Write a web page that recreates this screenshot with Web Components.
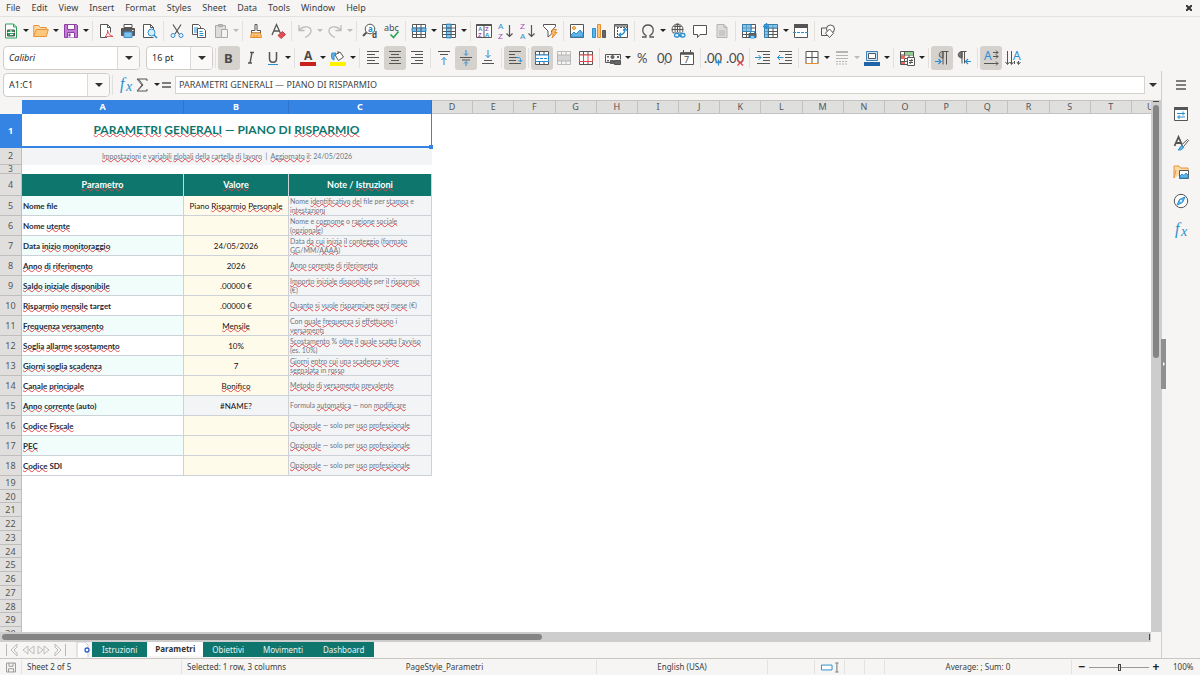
<!DOCTYPE html>
<html lang="en">
<head>
<meta charset="utf-8">
<title>Piano Risparmio — Calc</title>
<style>
html, body { margin: 0; height: 100%; }
body { font: 9px/12px "Noto Sans", "Liberation Sans", sans-serif; color: #3d3d3d; background: #f6f5f4; overflow: hidden; }
</style>
</head>
<body>
<calc-window></calc-window>
<script>
const define = (name, html, setup) => customElements.define(name, class extends HTMLElement {
  connectedCallback() {
    if (this.shadowRoot) return;
    const root = this.attachShadow({ mode: 'open' });
    const t = document.createElement('template');
    t.innerHTML = typeof html === 'function' ? html(this) : html;
    root.append(t.content.cloneNode(true));
    if (setup) setup(root, this);
  }
});

const RESET = `
  button { font: inherit; color: inherit; background: none; border: 0; padding: 0; margin: 0; }
  input { font: inherit; color: inherit; background: none; border: 0; padding: 0; margin: 0; outline: 0; min-width: 0; }
`;

const GRID = 'M1.5 1.5h13v13h-13zM5.5 1.5v13M10 1.5v13M1.5 5h13M1.5 8.5h13M1.5 11.5h13';
const ICONS = {
  new: '<path class="g ff" d="M2.5 1h8l3 3v11h-11z"/><path class="g" d="M10.5 1v3h3"/><path class="fg" d="M4.5 7h7v6h-7z"/><path stroke="#fff" d="M4.5 9.5h7M8 7v2.5M7 11.5h3"/>',
  open: '<path d="M.8 13.5V2.5h5l1.5 2h6v3" stroke="#e8953a" fill="#fbd9a6"/><path d="M.8 13.5l2.5-7h12l-2 7z" stroke="#e8953a" fill="#fdc77c"/>',
  save: '<path d="M1.5 1.5h12l1 1v12h-13z" stroke="#8e3fa5" fill="#c17bd4"/><path d="M4.5 1.5h7v5h-7zM4.5 14.5v-5h7v5" stroke="#8e3fa5" fill="#fff"/><path d="M6.5 10.5v3" stroke="#8e3fa5" stroke-width="2"/>',
  pdf: '<path class="ff" d="M9 14.5H2.5v-13h7l3 3v5"/><path d="M9.5 1.5v3h3"/><path class="r" d="M7 14c2-2 3-5 2.5-7 0 3 2.5 5.5 5.5 6.500-3-.5-6 0-8 .500z"/>',
  print: '<path d="M4.5 5.5v-4h7v4M1.5 5.5h13v7h-13z" fill="#5a5a5a"/><path d="M4 4.5v-3h8v3z" fill="#fff"/><path d="M4 9h8v5.5H4z" fill="#7fc3ec" stroke="#3b8fc6"/><path stroke="#fff" d="M12 7.5h1.5"/>',
  preview: '<path class="ff" d="M11.5 14.5h-10v-13h7l3 3v4"/><path d="M8.5 1.5v3h3"/><circle class="b" cx="9.5" cy="9.5" r="3.5" fill="#d8ecf8"/><path class="b" stroke-width="1.5" d="M12 12l3 3"/>',
  cut: '<path d="M4 1.5l6 9.5M12 1.5L6 11" stroke-width="1.2"/><circle class="b" cx="4" cy="12.5" r="2"/><circle class="b" cx="12" cy="12.5" r="2"/>',
  copy: '<path class="ff" d="M1.5 1.5h6l2 2v8h-8z"/><path class="b" d="M3 5h4M3 7h3M3 9h3"/><path class="ff" d="M6.5 5.5h6l2 2v7h-8z"/><path class="b" d="M8.5 8.5h3M8.5 10.5h4M8.5 12.5h4"/>',
  paste: '<path stroke="#aaa" fill="#ddd" d="M2.5 2.5h10v12h-10z"/><path stroke="#aaa" fill="#bbb" d="M5.5 1.5h4v2h-4z"/><path stroke="#aaa" fill="#f3f3f3" d="M8.5 6.5h6v8h-6z"/>',
  brush: '<path class="ff" d="M7 1.5h2v6h3.5v2.5h-9V7.5H7z"/><path d="M3.5 10l-1 4.5h11l-1-4.5z" stroke="#e88d2c" fill="#fbc47c"/><path stroke="#e88d2c" d="M6 14v-2M9 14v-2"/>',
  clear: '<path stroke-width="1.3" d="M2 12L6.5 1.5l4 9M4 8h5.5"/><path d="M8 12.5l4.5-4 3 3-4.5 4z" fill="#e44d55" stroke="#c83f48"/>',
  undo: '<path stroke="#bbb" stroke-width="1.3" d="M2 2v5.5h5.5M2.5 7C6 2.5 14 3 14 8c0 3-3 5-6 6.5"/>',
  redo: '<path stroke="#bbb" stroke-width="1.3" d="M14 2v5.5H8.5M13.5 7C10 2.5 2 3 2 8c0 3 3 5 6 6.5"/>',
  find: '<circle cx="8" cy="6" r="4.8" fill="#fff"/><path stroke-width="2" d="M4.5 9.5L1 13"/><text x="6" y="9" class="tb" font-size="8" font-weight="bold">a</text><text x="10" y="15" class="tk" font-size="8" font-weight="bold">d</text>',
  spell: '<text x="0" y="8" class="tk" font-size="9">abc</text><path class="g" stroke-width="1.6" d="M6.5 11.5l3 3 5-6"/>',
  row: `<path class="ff" d="${GRID}"/><path class="fb b" d="M1 5h14v3.5H1z" opacity=".85"/><path d="M5.5 5v3.5M10 5v3.5"/>`,
  col: `<path class="ff" d="${GRID}"/><path class="fb b" d="M5.5 1h4.5v14H5.5z" opacity=".75"/><path d="M5.5 5H10M5.5 8.5H10M5.5 11.5H10"/>`,
  sort: '<path class="ff" d="M.5 1.5h15v13H.5zM8 1.5v13"/><path stroke-width="2" d="M.5 2h15"/><text x="2" y="8" class="tb l" font-size="6" font-weight="bold">A</text><text x="2" y="14" class="tp l" font-size="6" font-weight="bold">Z</text><text x="9" y="8" class="tp l" font-size="6" font-weight="bold">Z</text><text x="9" y="14" class="tb l" font-size="6" font-weight="bold">A</text>',
  az: '<text x="0" y="6" class="tb l" font-size="8">A</text><text x="0" y="16" class="tp l" font-size="8">Z</text><path d="M11.5 2v12M8.5 10.5l3 3 3-3" stroke-width="1.2"/>',
  za: '<text x="0" y="6" class="tp l" font-size="8">Z</text><text x="0" y="16" class="tb l" font-size="8">A</text><path d="M11.5 2v12M8.5 10.5l3 3 3-3" stroke-width="1.2"/>',
  filter: '<path class="ff" d="M1.5 1.5h12v2l-4 4.5v3L6 14V8L1.5 3.5z"/><path d="M11 6.5h3.5l-2 3h2.5l-5 5.5 1.5-4H9z" fill="#fbc47c" stroke="#e88d2c"/>',
  image: '<path class="ff" d="M1.5 1.5h13v13h-13z"/><circle cx="5" cy="5" r="1.5" fill="#fbc47c" stroke="#e88d2c"/><path class="b fb" d="M2 14v-2l3-3 2 2 4-4 3 3.5V14z"/>',
  chart: '<path class="b fb" d="M1.5 5.5h3v9h-3z"/><path d="M6.5 1.5h3v13h-3z" fill="#fbc47c" stroke="#e88d2c"/><path fill="#666" d="M11.5 7.5h3v7h-3z"/>',
  pivot: '<path class="ff" d="M1.5 1.5h13v13h-13z"/><path stroke-dasharray="2 1" d="M4.5 4v11M4 4.5h11"/><path stroke="#999" stroke-width="2" d="M2 3h12"/><path class="b" stroke-width="1.3" d="M6 12c4.5 0 6-2 6-6M10 7.5L12 5.5l2 2M8 10l-2 2 2 2"/>',
  omega: '<path stroke-width="1.3" d="M2 14h4v-1.5C1 9.5 2 2 8 2s7 7.5 2 10.5V14h4"/>',
  link: '<circle cx="7.5" cy="6.5" r="5.5"/><path d="M2 6.5h11M7.5 1v11M3.5 3.5h8M3.5 9.5h8"/><ellipse cx="7.5" cy="6.5" rx="2.5" ry="5.5"/><path fill="#f6f5f4" stroke="none" d="M4 9.5h12V16H4z"/><rect class="b" stroke-width="1.3" x="4.5" y="10.5" width="5" height="3.5" rx="1.7"/><rect class="b" stroke-width="1.3" x="10" y="10.5" width="5" height="3.5" rx="1.7"/><path class="b" d="M8 12.3h4"/>',
  comment: '<path class="ff" d="M1.5 2.5h13v9H8L5.5 14.5v-3h-4z"/>',
  header: '<path stroke="#b5b5b5" fill="#dcdcdc" d="M3 1.5h7l3 3v10H3z"/><path stroke="#b5b5b5" d="M10 1.5v3h3M5 8h6M5 10h6M5 12h6"/>',
  parea: `<path class="ff" d="${GRID}"/><path class="b fb" d="M1.5 1.5H10v7H1.5z" opacity=".75"/><path d="M8 10.5h7v4H8z" fill="#666"/><path d="M9.5 10V8.5h4V10M9.5 13h4v2h-4z" class="b ff"/>`,
  freeze: `<path class="ff" d="${GRID}"/><path class="b fb" d="M1.5 1.5h13V5h-13zM1.5 5H5v9.5H1.500z" opacity=".75"/><path class="b" stroke-width="1.5" d="M3.5 0v6M0 3.5h6"/>`,
  split: '<path class="ff" d="M1.5 1.5h13v13h-13z"/><path fill="#555" d="M1.5 1.5h13v3h-13z"/><path class="b" stroke-dasharray="3 1" d="M0 9.5h16"/>',
  shapes: '<path d="M1.5 5h7v7.5h-7z"/><circle class="ff" cx="10.5" cy="6" r="4"/><path class="ff" d="M9.5 6l4 4.2-4 4.3-4-4.3z"/>',
  bold: '<text x="3" y="13" class="tk" font-size="13" font-weight="bold">B</text>',
  italic: '<path stroke-width="1.4" d="M9 2.5L7 13M7 2.5h4M5 13h4"/>',
  under: '<path stroke-width="1.5" d="M4.5 2v6.5c0 5 7 5 7 0V2"/><path class="b" d="M3 14.5h10"/>',
  fcolor: '<text x="4" y="10" class="tk" font-size="12" font-weight="bold">A</text><path fill="#c9211e" stroke="none" d="M0 12h16v4H0z"/>',
  fill: '<path class="ff" d="M5 5l5-3 3.5 5-5 3.5zM8 4V1"/><path class="b fb" d="M2 3h4l-2 3v4c-3-1-3-4-2-7z"/><path fill="#fff200" stroke="none" d="M0 12h16v4H0z"/>',
  left: '<path d="M2 1.5h12M2 4.5h8M2 7.5h12M2 10.5h8M2 13.5h12"/>',
  center: '<path d="M2 1.5h12M4 4.5h8M2 7.5h12M4 10.5h8M2 13.5h12"/>',
  right: '<path d="M2 1.5h12M6 4.5h8M2 7.5h12M6 10.5h8M2 13.5h12"/>',
  top: '<path d="M2 1.5h12M4 4.5h8"/><path class="b" d="M8 15V7.5M5.5 10L8 7.5l2.5 2.5"/>',
  middle: '<path d="M2 7.5h12M4 10h8"/><path class="b" d="M8 0v5M6 3.5l2 2 2-2M8 16v-4M6 13.5l2-2 2 2"/>',
  bottom: '<path d="M2 13.5h12M4 10.5h8"/><path class="b" d="M8 0v7.5M5.5 5L8 7.5 10.5 5"/>',
  wrap: '<path d="M2 1.5h12M2 4.5h6M2 7.5h7M2 10.5h7M2 13.5h12"/><path class="b" d="M9 7.5h2.5c2 0 2 1 2 4M11.5 10l2 2 2-2"/>',
  merge: `<path class="ff" d="${GRID}"/><path class="b" fill="#fff" d="M1.5 5h13v6.5h-13z"/><path class="b" stroke-dasharray="3 1" d="M2 8.5h12"/>`,
  mergec: '<path stroke="#bbb" d="M1.5 1.5h13v13h-13zM5.5 1.5v4M10 1.5v4M5.5 11v4M10 11v4"/><path stroke="#b5b5b5" fill="#d5d5d5" d="M1.5 5h13v6h-13z"/>',
  unmerge: `<path class="ff" d="${GRID}"/><path class="r" fill="#fff" d="M1.5 5h13v6.5h-13zM5.5 5v6.5M10 5v6.5"/>`,
  currency: '<path d="M9 12.5H.5v-8h15v5"/><path fill="#666" stroke="none" d="M2 6h2v1.5H2zM12 6h2v2h-2zM2 10h2v1.5H2z"/><circle cx="7.5" cy="7" r="1.5" fill="#666"/><path fill="#666" d="M5.5 13.500v-3h3v3zM9.500 14.500v-4h6v4z"/>',
  percent: '<text x="2" y="13" class="tk" font-size="13" font-family="Lato">%</text>',
  number: '<text x="0" y="13" class="tk" font-size="13" font-family="Lato">00</text><path d="M8 12.500v2"/>',
  date: '<path class="ff" d="M1.5 3h13v11.5h-13z"/><path stroke-width="2.5" d="M1.5 3.5h13"/><path d="M4.5 0v3M11.5 0v3"/><text x="5" y="13" class="tk" font-size="9">7</text>',
  adddec: '<text x="-2" y="13" class="tk" font-size="13" font-family="Lato">.00</text><path class="b" stroke-width="1.3" d="M12.5 9.5v6M9.5 12.5h6"/>',
  deldec: '<text x="-2" y="13" class="tk" font-size="13" font-family="Lato">.00</text><path class="r" stroke-width="1.3" d="M9.5 10l5.5 5.5M15 10l-5.5 5.5"/>',
  indent: '<path d="M2 1.5h13M8 4.5h7M8 7.5h7M8 10.5h7M2 13.5h13"/><path class="b" d="M0 7.5h6M3.5 5L6 7.5 3.5 10"/>',
  outdent: '<path d="M2 1.5h13M8 4.5h7M8 7.5h7M8 10.5h7M2 13.5h13"/><path class="b" d="M6.5 7.5H.5M3 5L.5 7.5 3 10"/>',
  border: '<path class="ff" d="M2 1.5h12v12H2zM8 1.5v12M2 7.5h12"/><path stroke="#e88d2c" d="M1.5 13.5h13"/>',
  bstyle: '<path stroke="#b5b5b5" stroke-width="2" d="M2 2h12"/><path stroke="#b5b5b5" d="M2 5.5h12M2 8.5h12"/><path stroke="#b5b5b5" stroke-dasharray="2 1" d="M2 11.5h12M2 14h12"/>',
  bcolor: '<path stroke="#3b7fb8" fill="#cfe6f6" d="M2.5 1.5h11v9h-11z"/><path class="ff" d="M4.5 3.5h7v5h-7z"/><path fill="#1f63a8" stroke="none" d="M0 12h16v4H0z"/>',
  cond: `<path class="ff" d="${GRID}"/><path fill="#8ed08e" stroke="none" d="M6 2h8v3H6z"/><path fill="#e46a62" stroke="none" d="M2 5.5h4V9H2zM2 12h4v2H2z"/><path class="ff" d="M8.5 7.5h7v8h-7z"/><path d="M10 10.5h4M10 12.5h4M13 9l-2 5"/>`,
  ltr: '<path fill="#b9b6b2" d="M9 1.5v6.500c-5 0-5-6.500 0-6.500z"/><path d="M14.5 1.5H9v13M12.5 1.5v13"/><path class="b" stroke-width="1.2" d="M1 11.5h6M4.5 9L7 11.5 4.5 14"/>',
  rtl: '<path fill="#777" d="M6 1.5v6.500c-5 0-5-6.500 0-6.500z"/><path d="M10.5 1.5H6v12M8.5 1.5v12"/><path class="b" stroke-width="1.2" d="M15 11.5H9.500M12 9l-2.5 2.5L12 14"/>',
  thoriz: '<text x="1" y="10" class="tb" font-size="12">A</text><path d="M10 2.5h5M10 6.5h5M1 13.5h14M13 .5l2 2-2 2M13 4.5l2 2-2 2M13 11.5l2 2-2 2"/>',
  tvert: '<text x="8" y="10" class="tb" font-size="12">A</text><path d="M2.5 1v13M6.5 1v13M9.5 11v3M13.5 11v3M.5 12l2 2.5 2-2.5M5 12l1.5 2.5L8.5 12M12 12l1.5 2.5 2-2.5"/>',
  fx: '<text x="2" y="12" class="tb" font-size="16" font-family="Liberation Serif" font-style="italic">f</text><text x="8" y="14" class="tb" font-size="14" font-family="Liberation Serif" font-style="italic">x</text>',
  sum: '<path d="M13 4V2H3l5 6-5 6h10v-2M4.5 2L9 8l-5 5.5"/>',
  equal: '<path stroke-width="1.5" d="M4 6h9M4 10h9"/>',
  burger: '<path stroke-width="1.5" d="M3 4h10M3 8h10M3 12h10"/>',
  props: '<path class="ff" d="M1.5 1.5h13v13h-13z"/><path fill="#555" d="M1.5 1.5h13v2h-13z"/><path class="b" d="M4 7.5h8M10 5.5v4M4 11h8M6 9v4"/>',
  styles: '<path stroke-width="1.8" d="M1.5 11L5.5 2l4 9M3 8h5"/><path class="ff" d="M14.5 4.5l1 1-5 6-2-1.5z"/><path class="b fb" d="M8.5 10.5l2 1.5c-1 3-3 3-5.5 3 2-1 1.5-3 3.5-4.5z"/>',
  gallery: '<path d="M1 14V2h5l1.5 2H15v3" stroke="#e8953a" fill="#fbd9a6"/><path d="M1 14l2-8" stroke="#e8953a"/><path class="ff" d="M6.5 6.5h9v8h-9z"/><path class="b fb" d="M7 14v-2l2-2 2 1.5L13 9l2 2v3z"/>',
  compass: '<circle class="ff" cx="8" cy="8" r="6.7"/><path class="b fb" d="M12 4l-2.5 5.5L4 12l2.5-5.5z"/><circle cx="8" cy="8" r="1" fill="#fff" stroke="none"/>',
  disk: '<path stroke="#888" d="M2.5 2.5h11v11h-11zM5.5 2.5v4h5v-4M5 13.5v-4h6v4"/>',
  selmode: '<path class="b ff" stroke-width="1.2" d="M-2.5 5h13v6h-13z"/><path d="M16.5 3v10M14.5 2.5h4M14.5 13.5h4"/>',
  addtab: '<path class="ff" stroke="#ccc" d="M1 0h8l3 3v13H1z"/><circle cx="11" cy="8" r="2" fill="#fff" stroke="#2a5fc4" stroke-width="1.3"/>',
  first: '<path stroke="#bbb" d="M2.5 2v12M13 2L7 8l6 6v-3l-3-3 3-3z"/>',
  prev: '<path stroke="#bbb" d="M8 4L3 8l5 4zM14 4L9 8l5 4z"/>',
  next: '<path stroke="#bbb" d="M2 4l5 4-5 4zM8 4l5 4-5 4z"/>',
  last: '<path stroke="#bbb" d="M13.5 2v12M3 2l6 6-6 6v-3l3-3-3-3z"/>'
};

define('app-icon', el => `<style>
  :host { display: block; width: 16px; height: 16px; flex: none; }
  svg { display: block; width: 100%; height: 100%; overflow: visible; fill: none; stroke: #555; }
  .ff { fill: #fff; } .b { stroke: #2a8fd0; } .fb { fill: #62b3e6; }
  .g { stroke: #2ba35a; } .fg { fill: #2ba35a; } .r { stroke: #e2474b; }
  text { stroke: none; } .tk { fill: #4a4a4a; } .tb { fill: #2a8fd0; } .tp { fill: #a548b8; }
  .l { font-family: "Liberation Sans", sans-serif; }
</style><svg viewBox="0 0 16 16" aria-hidden="true">${ICONS[el.getAttribute('name')]}</svg>`);

define('tool-button', el => {
  const off = el.hasAttribute('off');
  return `<style>${RESET}
  :host { display: flex; align-items: center; height: 24px; flex: none; }
  .main { width: 22px; height: 24px; display: grid; place-items: center; border-radius: 3px; }
  .main[aria-pressed="true"] { background: #d5d1cd; }
  .more { width: 8px; height: 24px; display: grid; place-items: center; }
  .more::before { content: ""; border: 3px solid transparent; border-top: 3px solid ${off ? '#bbb' : '#222'}; border-bottom: 0; }
</style><button class="main" ${off ? 'disabled' : ''} aria-pressed="${el.hasAttribute('on')}" aria-label="${el.getAttribute('label')}"><app-icon name="${el.getAttribute('icon')}"></app-icon></button>${
  el.hasAttribute('menu') ? `<button class="more" ${off ? 'disabled' : ''} aria-label="${el.getAttribute('label')} options"></button>` : ''}`;
});

define('tool-sep', `<style>:host { display: block; width: 1px; height: 20px; margin: 0 2px; background: #e2e0dd; flex: none; }</style>`);

define('tool-bar', `<style>:host { display: flex; align-items: center; height: 27px; overflow: hidden; }</style><slot></slot>`);

define('combo-box', el => `<style>${RESET}
  :host { display: flex; height: 22px; border: 1px solid #d0cdc9; border-radius: 4px; background: #fff; overflow: hidden; flex: none; }
  input { flex: 1; padding-left: 5px; color: #2b2b2b; }
  button { width: 22px; border-left: 1px solid #dcdad7; background: #faf9f8; display: grid; place-items: center; }
  button::before { content: ""; border: 4px solid transparent; border-top-color: #333; border-bottom: 0; }
</style><input aria-label="${el.getAttribute('label')}" value="${el.getAttribute('value')}"><button aria-label="Open list"></button>`);

define('menu-bar', `<style>${RESET}
  :host { display: flex; height: 16px; align-items: center; padding-left: 6px; gap: 11px; }
  .close { margin-left: auto; width: 22px; height: 16px; display: grid; place-items: center; }
  svg { width: 6px; height: 6px; stroke: #333; stroke-width: 2; }
</style>${['File','Edit','View','Insert','Format','Styles','Sheet','Data','Tools','Window','Help'].map(m => `<button>${m}</button>`).join('')}
<button class="close" aria-label="Close document"><svg viewBox="0 0 6 6"><path d="M0 0l6 6M6 0L0 6"/></svg></button>`);

const bar = list => list.trim().split(/\s+/).map(s => {
  if (s === '|') return '<tool-sep></tool-sep>';
  const [icon, flags = ''] = s.split(':');
  return `<tool-button icon="${icon}" label="${icon}" ${flags.includes('m') ? 'menu' : ''} ${flags.includes('x') ? 'off' : ''} ${flags.includes('p') ? 'on' : ''}></tool-button>`;
}).join('');

define('formula-bar', `<style>${RESET}
  :host { display: flex; align-items: center; height: 27px; padding: 0 0 2px 3px; }
  combo-box { width: 105px; }
  tool-button { margin-right: -6px; }
  .line { flex: 1; height: 16px; border: 1px solid #d5d3d0; background: #fff; padding-left: 3px; color: #444; margin-left: 4px; }
  .drop { width: 16px; height: 20px; display: grid; place-items: center; }
  .drop::before { content: ""; border: 4px solid transparent; border-top-color: #333; border-bottom: 0; }
</style><combo-box label="Name box" value="A1:C1"></combo-box><tool-sep></tool-sep>${bar('fx sum:m equal')}
<input class="line" aria-label="Input line" value="PARAMETRI GENERALI — PIANO DI RISPARMIO"><button class="drop" aria-label="Expand formula bar"></button>`);

/* ~word~ marks a run that the spell checker underlines. */
const ROWS = [
  ['Nome file', 'Piano ~Risparmio~ ~Personale~', 'Nome ~identificativo~ ~del~ file per ~stampa~ e|~intestazioni~'],
  ['Nome ~utente~', '', 'Nome e ~cognome~ o ~ragione~ ~sociale~|(~opzionale~)'],
  ['Data ~inizio~ ~monitoraggio~', '24/05/2026', 'Data ~da~ ~cui~ ~inizia~ ~il~ ~conteggio~ (~formato~|~GG~/MM/~AAAA~)'],
  ['~Anno~ ~di~ ~riferimento~', '2026', '~Anno~ ~corrente~ ~di~ ~riferimento~'],
  ['~Saldo~ ~iniziale~ ~disponibile~', '.00000 €', '~Importo~ ~iniziale~ ~disponibile~ per ~il~ ~risparmio~|(€)'],
  ['~Risparmio~ ~mensile~ target', '.00000 €', '~Quanto~ ~si~ ~vuole~ ~risparmiare~ ~ogni~ ~mese~ (€)'],
  ['~Frequenza~ ~versamento~', '~Mensile~', 'Con ~quale~ ~frequenza~ ~si~ ~effettuano~ i|~versamenti~'],
  ['~Soglia~ ~allarme~ ~scostamento~', '10%', "~Scostamento~ % ~oltre~ ~il~ ~quale~ ~scatta~ ~l'avviso~|(es. 10%)"],
  ['~Giorni~ ~soglia~ ~scadenza~', '7', '~Giorni~ ~entro~ ~cui~ ~una~ ~scadenza~ ~viene~|~segnalata~ in ~rosso~'],
  ['~Canale~ ~principale~', '~Bonifico~', '~Metodo~ ~di~ ~versamento~ ~prevalente~'],
  ['~Anno~ ~corrente~ (auto)', '#NAME?', 'Formula ~automatica~ — non ~modificare~'],
  ['~Codice~ ~Fiscale~', '', '~Opzionale~ — solo per ~uso~ ~professionale~'],
  ['~PEC~', '', '~Opzionale~ — solo per ~uso~ ~professionale~'],
  ['~Codice~ SDI', '', '~Opzionale~ — solo per ~uso~ ~professionale~']
];
const mark = s => s.replace(/~([^~]+)~/g, '<u>$1</u>').replace('|', '<br>');
const rest = '<td colspan="18"></td>';

define('sheet-grid', `<style>
  :host { display: block; overflow: hidden; background: #fff; min-width: 0; min-height: 0; }
  table { width: 100%; table-layout: fixed; border-collapse: separate; border-spacing: 0; }
  th, td { padding: 0; box-sizing: border-box; overflow: hidden; white-space: nowrap; }
  .rh { width: 22px; } .ca { width: 162px; } .cb { width: 105px; } .cc { width: 143px; } .cu { width: 19px; }
  thead th { height: 14px; line-height: 12px; font-weight: 400; color: #555; background: #dfdfde; border: solid #c3c2c0; border-width: 1px 1px 1px 0; }
  thead th:first-child { background: #f6f5f4; border-color: #f6f5f4; }
  thead th:last-child { text-align: left; padding-left: 15px; border-right: 0; }
  thead th.on { background: #3584e4; border-color: #3584e4 #2c74cd #3584e4 #3584e4; color: #fff; font-weight: 700; }
  tbody th { font-weight: 400; color: #555; background: #e0dfdd; border: solid #bfbebc; border-width: 0 1px 1px 0; line-height: 12px; }
  tbody th.on { background: #3584e4; color: #fff; font-weight: 700; border-color: #3584e4; }
  td { font-family: Lato, "Liberation Sans", sans-serif; }
  u { text-decoration: underline wavy #e2474b 1px; text-underline-offset: -1px; text-decoration-skip-ink: none; }
  .title { height: 34px; position: relative; overflow: visible; text-align: center; font-size: 12px; line-height: 18px; font-weight: 700; color: #0f766e; padding-bottom: 1px; border-right: 1px solid #3584e4; border-bottom: 2px solid #3584e4; }
  .title::after { content: ""; position: absolute; right: -2px; bottom: -3px; width: 4px; height: 4px; background: #3584e4; }
  .sub { height: 17px; background: #f3f4f6; text-align: center; font-size: 7px; line-height: 12px; color: #6f7683; padding-bottom: 1px; }
  .thin th { height: 9px; line-height: 8px; overflow: visible; font-size: 8px; }
  .head td { height: 22px; background: #0f766e; color: #fff; font-weight: 700; text-align: center; font-size: 9px; border-right: 1px solid #c9d6d8; }
  .head td:last-child { background: none; border: 0; }
  .p td { height: 20px; }
  .p .a, .p .b, .p .c { border: solid #cdd2d9; border-width: 0 1px 1px 0; }
  .a { font-size: 8px; font-weight: 700; color: #1f2937; padding-left: 1px; }
  .p:nth-child(odd) .a { background: #f0fdfa; }
  .b { font-size: 8px; text-align: center; background: #fffbeb; color: #111; }
  .p:nth-child(15) .b, .c { background: #f3f4f6; }
  .c { font-size: 7px; line-height: 9px; color: #6f7683; padding-left: 1px; }
  .e th { height: 14px; }
  .e:nth-child(4n) th { height: 13px; line-height: 11px; }
</style><table>
<colgroup><col class="rh"><col class="ca"><col class="cb"><col class="cc">${'<col>'.repeat(17)}<col class="cu"></colgroup>
<thead><tr><th></th>${[...'ABCDEFGHIJKLMNOPQRSTU'].map((c, i) => `<th${i < 3 ? ' class="on"' : ''}>${c}</th>`).join('')}</tr></thead>
<tbody>
<tr><th class="on">1</th><td class="title" colspan="3">${mark('~PARAMETRI~ ~GENERALI~ — PIANO DI ~RISPARMIO~')}</td>${rest}</tr>
<tr><th>2</th><td class="sub" colspan="3">${mark('~Impostazioni~ e ~variabili~ ~globali~ ~della~ ~cartella~ ~di~ ~lavoro~ &nbsp;&#124;&nbsp; ~Aggiornato~ ~il~: 24/05/2026')}</td>${rest}</tr>
<tr class="thin"><th>3</th><td colspan="3"></td>${rest}</tr>
<tr class="head"><th>4</th><td>${mark('~Parametro~')}</td><td>${mark('~Valore~')}</td><td>${mark('Note / ~Istruzioni~')}</td>${rest}</tr>
${ROWS.map((r, i) => `<tr class="p"><th>${i + 5}</th><td class="a">${mark(r[0])}</td><td class="b">${mark(r[1])}</td><td class="c">${mark(r[2])}</td>${rest}</tr>`).join('')}
${Array.from({ length: 12 }, (_, i) => `<tr class="e"><th>${i + 19}</th><td colspan="3"></td>${rest}</tr>`).join('')}
</tbody></table>`);

define('scroll-track', el => {
  const v = el.hasAttribute('vertical');
  return `<style>
  :host { display: flex; flex-direction: ${v ? 'column' : 'row'}; position: relative; background: #cdcdcd; box-sizing: border-box; ${v ? 'width: 10px; padding: 5px 2px 0' : 'height: 10px; padding: 2px 0 2px 2px'}; }
  :host::after { content: ""; position: absolute; background: #444; ${v ? 'top: 1px; left: 2px; width: 6px; height: 1px' : 'right: 1px; top: 2px; width: 1px; height: 6px'}; }
  i { display: block; border-radius: 3px; background: #848484; ${v ? 'height: 48%' : 'width: 47%'}; }
</style><i></i>`;
});

define('sheet-tabs', `<style>${RESET}
  :host { display: flex; height: 16px; align-items: flex-start; padding-left: 4px; font-size: 8px; }
  .nav { display: grid; place-items: center; width: 16px; height: 15px; }
  .add { display: grid; place-items: center; width: 17px; height: 15px; margin-left: 7px; overflow: hidden; }
  .tab { height: 15px; padding: 0 10px; background: #0f766e; color: #e8f3f1; }
  .tab.edge { padding: 0 9px; }
  .tab[aria-selected="true"] { height: 14px; padding: 0 8px; background: #fff; color: #333; font-weight: 700; }
</style>${['first','prev','next','last'].map(n => `<button class="nav" aria-label="${n} sheet"><app-icon name="${n}"></app-icon></button>`).join('')}
<button class="add" aria-label="Add sheet"><app-icon name="addtab"></app-icon></button>
${['Istruzioni','Parametri','Obiettivi','Movimenti','Dashboard'].map((t, i) => `<button class="tab${i === 2 ? ' edge' : ''}" role="tab" aria-selected="${i === 1}">${t}</button>`).join('')}`);

define('side-deck', `<style>
  :host { display: flex; flex-direction: column; align-items: center; gap: 5px; padding-top: 2px; border-left: 1px solid #d0cecb; box-sizing: border-box; position: relative; }
  .grip { position: absolute; left: -1px; top: 268px; width: 5px; height: 50px; background: #909090; display: grid; place-items: center; border: 0; padding: 0; }
  .grip::before { content: ""; border: 2px solid transparent; border-left-color: #fff; border-right: 0; }
</style><button class="grip" aria-label="Collapse sidebar"></button>${bar('burger props styles gallery compass fx')}`);

define('status-bar', `<style>${RESET}
  :host { display: grid; grid-template-columns: 22px 160px 111px 304fr 171fr 47px 30px 20px 20px 187fr 96px 32px; height: 16px; border-top: 1px solid #c9c7c4; align-items: center; font-size: 8px; }
  span { white-space: nowrap; padding-left: 5px; line-height: 14px; min-height: 14px; box-sizing: border-box; border-right: 1px solid #e4e2df; }
  .mid { text-align: center; padding: 0; }
  .none { border: 0; }
  .ic { display: grid; place-items: center; padding: 0; }
  .ic app-icon { height: 13px; width: 14px; }
  .zoom { display: flex; align-items: center; gap: 3px; height: 14px; padding: 0 8px 0 6px; border: 0; }
  .zoom button { width: 8px; flex: none; font-size: 12px; line-height: 12px; font-weight: 700; color: #222; }
  input { flex: 1; width: 0; height: 12px; appearance: none; }
  input::-webkit-slider-runnable-track { height: 1px; background: #999; }
  input::-webkit-slider-thumb { appearance: none; width: 3px; height: 7px; margin-top: -3px; background: #ddd; border: 1px solid #444; box-sizing: border-box; }
</style><span class="ic"><app-icon name="disk"></app-icon></span><span>Sheet 2 of 5</span><span class="none">Selected: 1 row, 3 columns</span><span class="mid">PageStyle_Parametri</span><span class="mid">English (USA)</span><span></span><span class="ic"><app-icon name="selmode"></app-icon></span><span></span><span></span><span class="mid">Average: ; Sum: 0</span>
<div class="zoom"><button aria-label="Zoom out">−</button><input type="range" aria-label="Zoom" min="0" max="100" value="50"><button aria-label="Zoom in">+</button></div><span class="none">100%</span>`);

define('calc-window', `<style>
  :host { display: grid; height: 100vh; grid-template-rows: auto auto auto 1fr auto; }
  menu-bar { border-bottom: 1px solid #e4e2df; }
  .font { width: 135px; margin: 0 6px 0 3px; font-style: italic; }
  .size { width: 65px; }
  .work { display: grid; grid-template-columns: 1fr 39px; min-height: 0; }
  .doc { display: grid; grid-template-columns: 1fr 10px; grid-template-rows: auto 1fr auto auto; min-height: 0; min-width: 0; }
  formula-bar, sheet-tabs { grid-column: 1 / -1; }
</style>
<menu-bar></menu-bar>
<tool-bar>${bar('new:m open:m save:m | pdf print preview | cut copy paste:mx | brush clear | undo:mx redo:mx | find spell | row:m col:m | sort az za filter | image chart pivot | omega:m link comment header:x | parea freeze:m split | shapes')}</tool-bar>
<tool-bar><combo-box class="font" label="Font name" value="Calibri"></combo-box><combo-box class="size" label="Font size" value="16 pt"></combo-box>${bar('| bold:p italic under:m | fcolor:m fill:m | left center:p right | top middle:p bottom | wrap:p | merge:p mergec:x unmerge | currency:m percent number date | adddec deldec | indent outdent | border:m bstyle:mx bcolor:m | cond:m | ltr:p rtl | thoriz:p tvert')}</tool-bar>
<div class="work">
  <div class="doc">
    <formula-bar></formula-bar>
    <sheet-grid></sheet-grid><scroll-track vertical></scroll-track>
    <scroll-track></scroll-track><div></div>
    <sheet-tabs></sheet-tabs>
  </div>
  <side-deck></side-deck>
</div>
<status-bar></status-bar>`);
</script>
</body>
</html>
